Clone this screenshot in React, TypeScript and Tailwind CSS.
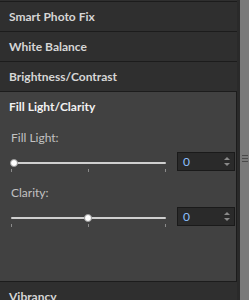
const font = { fontFamily: 'Lato, "Noto Sans", sans-serif' };

const Header = ({ title }: { title: string }) => (
  <div className="h-[30px] shrink-0 border-t border-[#1c1c1c] bg-[#2f2f2f] flex items-center pl-[9px]">
    <span className="text-[12px] font-bold text-[#d6d6d6] leading-[14px]">{title}</span>
  </div>
);

const Slider = ({ pos }: { pos: number }) => (
  <div className="relative w-[155px] h-[19px]">
    <div className="absolute left-0 right-0 top-[10px] h-[2px] bg-[#cfcfcf] rounded-full" />
    <div className="absolute left-0 top-[17px] w-px h-[3px] bg-[#8a8a8a]" />
    <div className="absolute left-[77px] top-[17px] w-px h-[3px] bg-[#8a8a8a]" />
    <div className="absolute right-0 top-[17px] w-px h-[3px] bg-[#8a8a8a]" />
    <div
      className="absolute top-[7px] w-[8px] h-[8px] rounded-full bg-white border border-[#9a9a9a]"
      style={{ left: pos - 4 }}
    />
  </div>
);

const NumBox = ({ value }: { value: string }) => (
  <div className="w-[58px] h-[19px] bg-[#2a2a2a] border border-[#1a1a1a] flex items-center justify-between pl-[5px] pr-[4px]">
    <span className="text-[12px] text-[#8cc0ff] leading-none">{value}</span>
    <div className="flex flex-col gap-[3px] items-center">
      <div className="w-0 h-0 border-l-[3px] border-r-[3px] border-b-[3px] border-l-transparent border-r-transparent border-b-[#8a8a8a]" />
      <div className="w-0 h-0 border-l-[3px] border-r-[3px] border-t-[3px] border-l-transparent border-r-transparent border-t-[#8a8a8a]" />
    </div>
  </div>
);

const Control = ({ label, pos }: { label: string; pos: number }) => (
  <div className="flex flex-col">
    <div className="pl-[11px] h-[16px] text-[12px] leading-[16px] text-[#c2c2c2]">{label}</div>
    <div className="flex items-center pl-[11px] mt-[6px] gap-[11px]">
      <Slider pos={pos} />
      <NumBox value="0" />
    </div>
  </div>
);

export default function App() {
  return (
    <div className="w-[249px] h-[300px] bg-[#2f2f2f] flex overflow-hidden" style={font}>
      <div className="w-[237px] flex flex-col shrink-0">
        <div className="h-px shrink-0 bg-[#2f2f2f]" />
        <Header title="Smart Photo Fix" />
        <Header title="White Balance" />
        <Header title="Brightness/Contrast" />
        <div className="h-[190px] shrink-0 border-t border-r border-[#1c1c1c] bg-[#414141] flex flex-col">
          <div className="h-[30px] flex items-center pl-[9px]">
            <span className="text-[12px] font-bold text-[#f2f2f2] leading-[14px]">Fill Light/Clarity</span>
          </div>
          <div className="mt-[8px] flex flex-col gap-[14px]">
            <Control label="Fill Light:" pos={3} />
            <Control label="Clarity:" pos={77} />
          </div>
        </div>
        <Header title="Vibrancy" />
      </div>
      <div className="w-[3px] bg-[#2a2a2a] shrink-0" />
      <div className="flex-1 bg-[#7a7a7a] flex flex-col items-center pt-[155px] gap-[2px]">
        <div className="w-[6px] h-px bg-[#4a4a4a]" />
        <div className="w-[6px] h-px bg-[#4a4a4a]" />
        <div className="w-[6px] h-px bg-[#4a4a4a]" />
      </div>
    </div>
  );
}
